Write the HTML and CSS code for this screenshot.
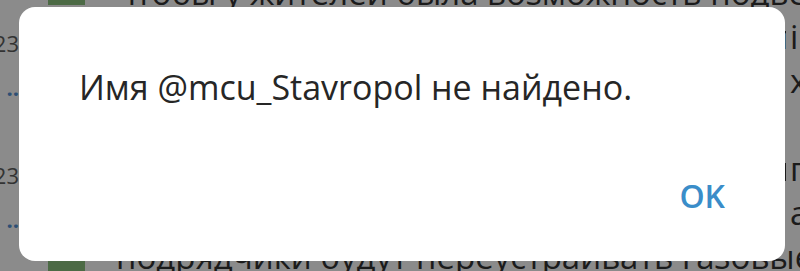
FILE: index.html
```html
<!DOCTYPE html>
<html lang="ru">
<head>
    <meta charset="UTF-8">
    <meta name="viewport" content="width=device-width, initial-scale=1.0">
    <title>Имя не найдено</title>
    <link rel="stylesheet" href="styles.css">
</head>
<body>
    <div class="screen">
        <div class="chat">
            <div class="row">
                <div class="stamp"></div>
                <div class="avatar avatar-top"></div>
                <div class="line"><span class="body">чтобы у жителей была возможность подвехи</span></div>
            </div>
            <div class="row">
                <div class="stamp">23</div>
                <div class="avatar"></div>
                <div class="line"><span class="body">газового оборудования, все работы будут</span><span class="tail">і</span></div>
            </div>
            <div class="row">
                <div class="stamp dots">..</div>
                <div class="avatar"></div>
                <div class="line"><span class="body">выполнены в срок до конца года, а также</span><span class="tail">х</span></div>
            </div>
            <div class="row">
                <div class="stamp"></div>
                <div class="avatar"></div>
                <div class="line"><span class="body">в ближайшие месяцы</span></div>
            </div>
            <div class="row">
                <div class="stamp">23</div>
                <div class="avatar"></div>
                <div class="line"><span class="body">специалисты проверят состояние сетей и</span><span class="tail">п</span></div>
            </div>
            <div class="row">
                <div class="stamp dots">..</div>
                <div class="avatar"></div>
                <div class="line"><span class="body">для этого жителям нужно будет оставить</span><span class="tail">а</span></div>
            </div>
            <div class="row">
                <div class="stamp"></div>
                <div class="avatar avatar-bottom"></div>
                <div class="line"><span class="body">подрядчики будут переустраивать газовые и з</span></div>
            </div>
        </div>

        <div class="dialog">
            <div class="message">Имя @mcu_Stavropol не найдено.</div>
            <div class="actions">
                <button class="btn">OK</button>
            </div>
        </div>
    </div>
</body>
</html>
```

FILE: styles.css
```css
body {
    margin: 0;
    font-family: "Open Sans", "Noto Sans", sans-serif;
}
.screen {
    position: relative;
    width: 800px;
    height: 271px;
    overflow: hidden;
    background-color: #8b8b8b;
}
.chat {
    margin-top: -29px;
    color: #1b1b1b;
}
.row {
    display: grid;
    grid-template-columns: 19px 66px minmax(0, 1fr);
    height: 44px;
}
.stamp {
    font-size: 22px;
    line-height: 44px;
    color: #333;
    text-align: right;
    overflow: hidden;
    white-space: nowrap;
    direction: rtl;
    padding-top: 6px;
}
.stamp.dots {
    color: #2d4f74;
    font-weight: bold;
}
.avatar {
    margin-left: 29px;
    width: 37px;
}
.avatar-top {
    background-color: #4c6a45;
    height: 34px;
}
.avatar-bottom {
    background-color: #4c6a45;
    height: 30px;
    margin-top: 26px;
}
.line {
    display: flex;
    justify-content: space-between;
    padding-left: 31px;
    font-size: 33px;
    line-height: 44px;
    white-space: nowrap;
    overflow: hidden;
}
.body {
    min-width: 0;
    overflow: hidden;
}
.tail {
    flex-shrink: 0;
    width: 12px;
    padding-left: 4px;
    margin-right: -2px;
    overflow: hidden;
}
.dialog {
    position: absolute;
    left: 19px;
    top: 7px;
    width: 766px;
    height: 254px;
    box-sizing: border-box;
    padding: 58px 60px 43px 60px;
    background-color: #fff;
    border-radius: 16px;
    display: flex;
    flex-direction: column;
    justify-content: space-between;
}
.message {
    font-size: 34px;
    line-height: 44px;
    color: #262626;
}
.actions {
    display: flex;
    justify-content: flex-end;
}
.btn {
    font-family: "Open Sans", "Noto Sans", sans-serif;
    font-size: 32px;
    font-weight: 600;
    line-height: 44px;
    color: #3a8dc9;
    background: none;
    border: none;
    padding: 0;
    cursor: pointer;
}
```
